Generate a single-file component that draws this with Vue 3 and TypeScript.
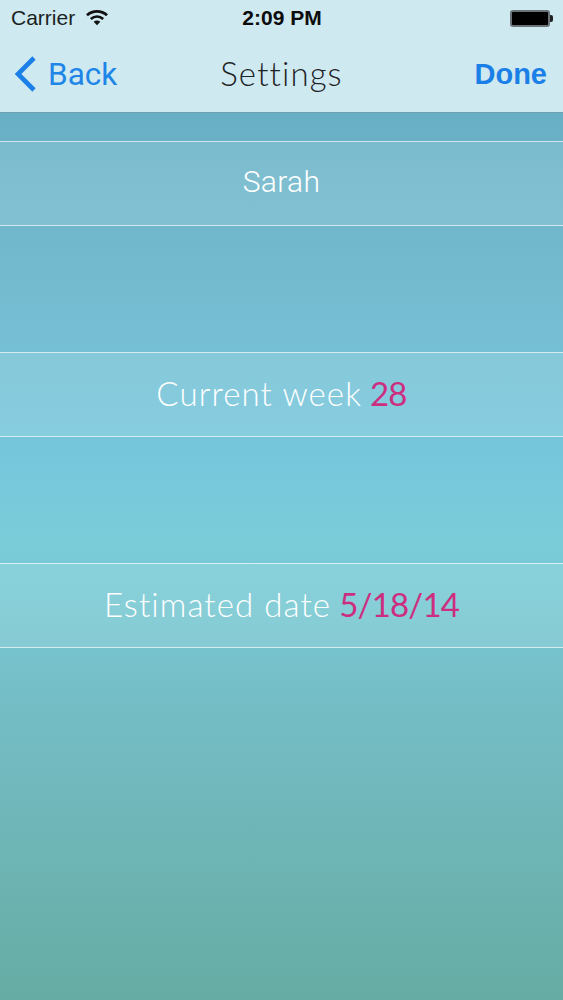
<script setup lang="ts">
interface Row { label: string; value?: string; plain?: boolean }
const rows: Row[] = [
  { label: 'Sarah', plain: true },
  { label: 'Current week', value: '28' },
  { label: 'Estimated date', value: '5/18/14' },
]
</script>

<template>
  <div class="screen">
    <header class="nav">
      <div class="status">
        <div class="status-left">
          <span>Carrier</span>
          <svg class="wifi" width="22" height="17" viewBox="0 0 23 17">
            <path d="M1 6.2 C7 0.8 16 0.8 22 6.2" fill="none" stroke="#111" stroke-width="2.8" />
            <path d="M5 10 C9 6.6 14 6.6 18 10" fill="none" stroke="#111" stroke-width="2.8" />
            <path d="M8 13 C10.2 11.1 12.8 11.1 15 13 L11.5 16.6 Z" fill="#111" />
          </svg>
        </div>
        <span class="time">2:09 PM</span>
        <div class="battery"><span class="cell"></span><span class="nub"></span></div>
      </div>
      <div class="bar">
        <div class="back">
          <svg width="24" height="36" viewBox="0 0 24 36">
            <path d="M21 2 L5 18 L21 34" fill="none" stroke="#1a7fe6" stroke-width="4.6" />
          </svg>
          <span>Back</span>
        </div>
        <span class="title">Settings</span>
        <span class="done">Done</span>
      </div>
    </header>
    <main class="list">
      <div v-for="row in rows" :key="row.label" class="row">
        <span :class="row.plain ? 'plain' : 'label'">{{ row.label }}</span>
        <span v-if="row.value" class="value">{{ row.value }}</span>
      </div>
    </main>
  </div>
</template>

<style>
html, body { margin: 0; padding: 0; }
</style>

<style scoped>
.screen {
  width: 563px;
  height: 1000px;
  overflow: hidden;
  display: flex;
  flex-direction: column;
  background: linear-gradient(180deg, #68aec4 112px, #75bcd1 300px, #76c7dc 460px, #7accd9 540px, #74bcc4 720px, #66aca4 1000px);
  font-family: "Lato", "Liberation Sans", sans-serif;
}
.nav {
  height: 112px;
  flex: none;
  background: #cfe9f1;
  border-bottom: 1px solid #6f9fb0;
  display: flex;
  flex-direction: column;
}
.status {
  height: 36px;
  display: grid;
  grid-template-columns: 1fr auto 1fr;
  align-items: center;
  padding: 0 10px 0 11px;
  font-family: "Liberation Sans", sans-serif;
  font-size: 21px;
  color: #1a1f22;
}
.status-left { display: flex; align-items: center; gap: 11px; }
.wifi { margin-top: -2px; }
.time { font-weight: 700; color: #0c0c0c; }
.battery { justify-self: end; display: flex; align-items: center; }
.cell {
  width: 36px;
  height: 13px;
  background: #000;
  border: 2px solid #6a7478;
  border-radius: 3px;
  display: block;
}
.nub { width: 3px; height: 7px; background: #222; border-radius: 0 2px 2px 0; display: block; }
.bar {
  flex: 1;
  display: grid;
  grid-template-columns: 1fr auto 1fr;
  align-items: center;
  padding: 0 16px;
}
.back {
  display: flex;
  align-items: center;
  gap: 11px;
  margin-left: -3px;
  color: #1f86e8;
  font-family: "Roboto", "Liberation Sans", sans-serif;
  font-weight: 400;
  font-size: 31.5px;
}
.title {
  font-size: 33px;
  font-weight: 300;
  letter-spacing: 1.1px;
  color: #1d2224;
  margin-top: -2px;
}
.done {
  justify-self: end;
  color: #1a7fe6;
  font-family: "Liberation Sans", sans-serif;
  font-weight: 700;
  font-size: 29px;
}
.list {
  display: flex;
  flex-direction: column;
  gap: 126px;
  padding-top: 28px;
}
.row {
  height: 83px;
  display: flex;
  align-items: center;
  justify-content: center;
  gap: 8px;
  background: rgba(220, 250, 250, 0.16);
  border-top: 1px solid rgba(255, 255, 255, 0.65);
  border-bottom: 1px solid rgba(255, 255, 255, 0.65);
  font-size: 33px;
  font-weight: 300;
  color: #fff;
}
.label, .value { margin-top: -4px; }
.label { letter-spacing: 1.1px; }
.plain {
  margin-top: -4px;
  font-family: "Roboto", "Liberation Sans", sans-serif;
  font-size: 30px;
  letter-spacing: 0.3px;
}
.value { color: #cc2e80; letter-spacing: -0.8px; font-weight: 400; }
</style>
